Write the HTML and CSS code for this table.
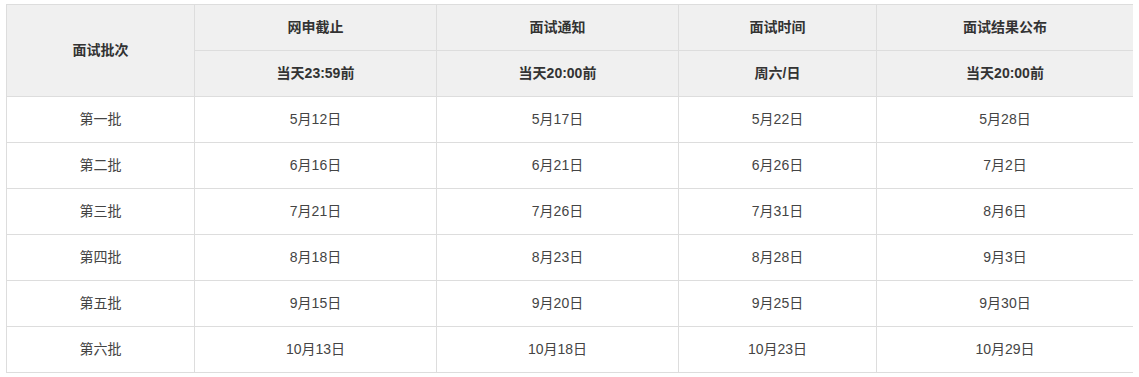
FILE: index.html
```html
<!DOCTYPE html>
<html lang="zh-CN">
<head>
<meta charset="UTF-8">
<title>面试批次安排</title>
<link rel="stylesheet" href="styles.css">
</head>
<body>
<table class="schedule">
  <colgroup>
    <col class="w-batch">
    <col class="w-wide">
    <col class="w-wide">
    <col class="w-mid">
    <col class="w-last">
  </colgroup>
  <thead>
    <tr>
      <th rowspan="2">面试批次</th>
      <th>网申截止</th>
      <th>面试通知</th>
      <th>面试时间</th>
      <th>面试结果公布</th>
    </tr>
    <tr>
      <th>当天23:59前</th>
      <th>当天20:00前</th>
      <th>周六/日</th>
      <th>当天20:00前</th>
    </tr>
  </thead>
  <tbody>
    <tr><td>第一批</td><td>5月12日</td><td>5月17日</td><td>5月22日</td><td>5月28日</td></tr>
    <tr><td>第二批</td><td>6月16日</td><td>6月21日</td><td>6月26日</td><td>7月2日</td></tr>
    <tr><td>第三批</td><td>7月21日</td><td>7月26日</td><td>7月31日</td><td>8月6日</td></tr>
    <tr><td>第四批</td><td>8月18日</td><td>8月23日</td><td>8月28日</td><td>9月3日</td></tr>
    <tr><td>第五批</td><td>9月15日</td><td>9月20日</td><td>9月25日</td><td>9月30日</td></tr>
    <tr><td>第六批</td><td>10月13日</td><td>10月18日</td><td>10月23日</td><td>10月29日</td></tr>
  </tbody>
</table>
</body>
</html>
```

FILE: styles.css
```css
body { margin: 4px 6px; background: #fff; font-family: "Liberation Sans", "Noto Sans CJK SC", sans-serif; font-size: 14px; color: #444; }
.schedule { border-collapse: collapse; table-layout: fixed; width: 1127px; }
.w-batch { width: 188px; }
.w-wide { width: 242px; }
.w-mid { width: 198px; }
.w-last { width: 257px; }
.schedule th, .schedule td { border: 1px solid #ddd; padding: 0; height: 45px; line-height: 45px; text-align: center; white-space: nowrap; }
.schedule th { background: #f0f0f0; color: #333; font-weight: bold; }
```
